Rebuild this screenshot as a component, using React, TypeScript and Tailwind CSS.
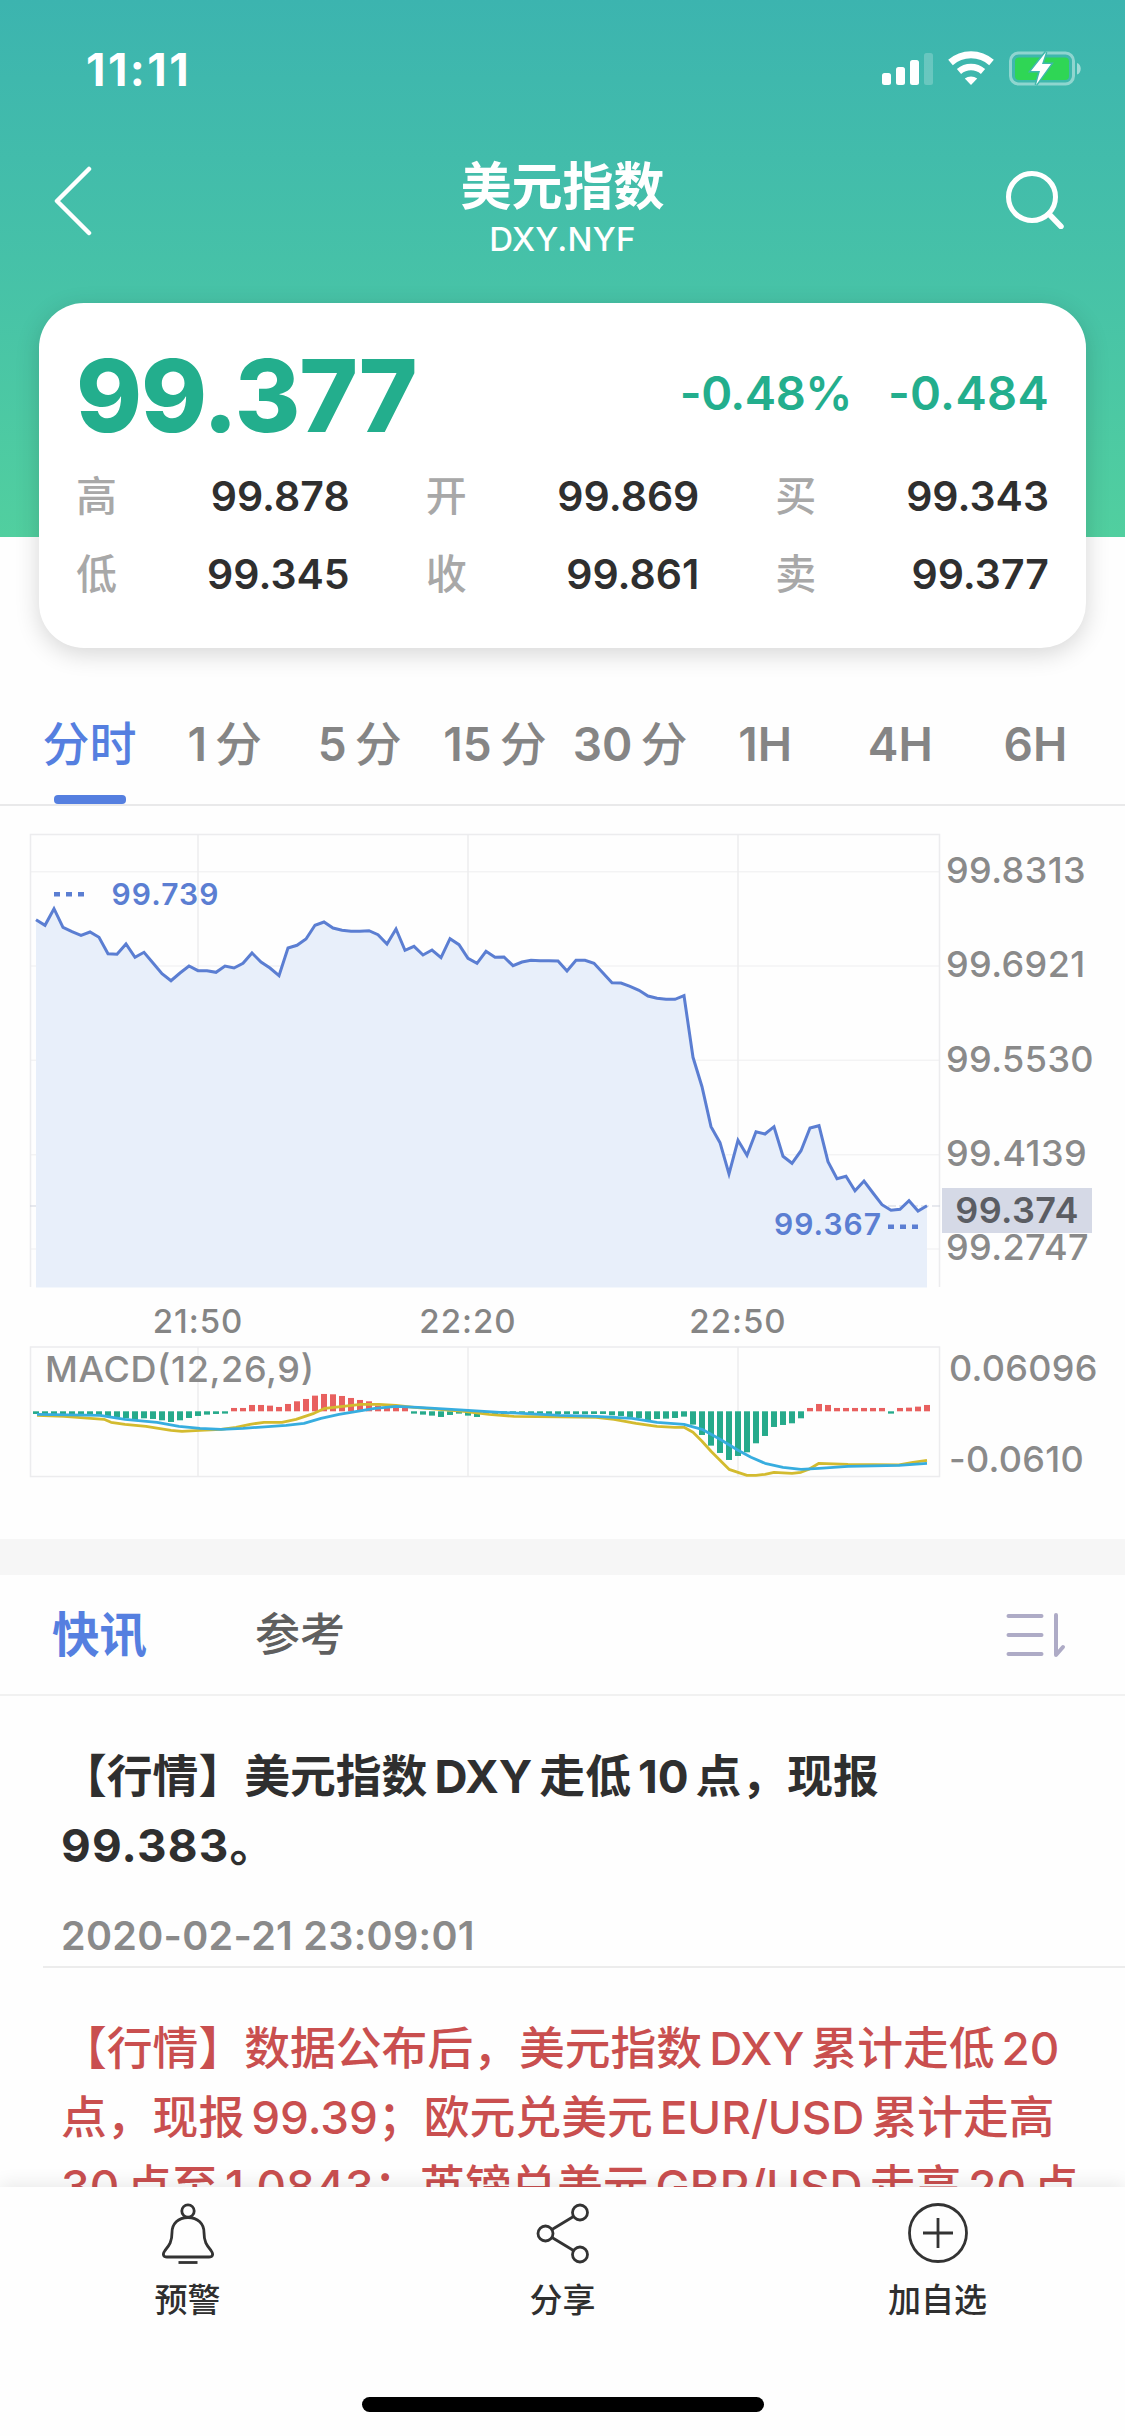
import type { ReactNode } from 'react'

const quotes = [
  { label: '高', value: '99.878' },
  { label: '开', value: '99.869' },
  { label: '买', value: '99.343' },
  { label: '低', value: '99.345' },
  { label: '收', value: '99.861' },
  { label: '卖', value: '99.377' },
]

const periods = [
  { num: '', unit: '分时' },
  { num: '1', unit: '分' },
  { num: '5', unit: '分' },
  { num: '15', unit: '分' },
  { num: '30', unit: '分' },
  { num: '1H', unit: '' },
  { num: '4H', unit: '' },
  { num: '6H', unit: '' },
]

const gridX = [198, 468, 738]
const times = ['21:50', '22:20', '22:50']
const priceTicks = ['99.8313', '99.6921', '99.5530', '99.4139', '99.2747']

// one sample per minute, distance below the chart area in thirds of a pixel
const prices = [
  299, 316, 266, 322, 335, 346, 336, 352, 401, 403, 372, 412, 397, 429, 461, 482, 459, 438, 452, 452,
  457, 438, 444, 430, 399, 426, 444, 467, 384, 376, 357, 316, 306, 324, 331, 334, 334, 332, 344, 372,
  327, 391, 379, 405, 390, 413, 356, 374, 415, 430, 394, 412, 411, 437, 426, 421, 422, 422, 423, 453,
  421, 421, 430, 459, 488, 489, 499, 511, 528, 535, 538, 538, 527, 712, 800, 920, 968, 1062, 961, 1006,
  935, 942, 920, 1009, 1030, 992, 924, 917, 1025, 1076, 1069, 1112, 1083, 1119, 1154, 1171, 1168, 1142, 1173, 1157,
]

// MACD histogram, same units, positive values go up
const histogram = [
  -8, -8, -8, -11, -11, -11, -11, -14, -15, -18, -21, -26, -21, -23, -27, -32, -27, -20, -14, -10,
  -8, -7, 10, 10, 19, 19, 17, 13, 22, 30, 37, 47, 52, 51, 46, 40, 34, 30, 17, 12,
  10, 10, -7, -10, -13, -17, -11, -7, -13, -17, -10, -8, -8, -8, -8, -8, -8, -8, -8, -8,
  -8, -9, -8, -8, -12, -14, -17, -20, -27, -23, -22, -20, -16, -40, -71, -103, -125, -146, -134, -123,
  -96, -74, -47, -41, -36, -21, 10, 22, 19, 10, 10, 10, 10, 10, 10, -7, 10, 11, 14, 19,
]

const dif =
  '37,79 64,80 104,83 111,86 125,88 146,90 171,94 182,95 200,94 221,93 236,91 250,88 264,86 282,86 296,83 314,77 325,72 343,70 361,68 379,68 396,69 414,71 464,75 489,78 514,80 560,80.5 596,81 614,83 636,87 657,90 675,91 684,91 693,96 702,105 711,115 720,124 729,133 738,136 747,139 756,139 765,138 774,136 792,137 801,136 809,133 819,127 848,128 899,128.5 913,126 927,124'
const dea =
  '37,78 100,79 125,83 157,86 179,90 200,92 221,93 243,92 286,89 304,87 321,82 339,78 357,75 375,72 396,70 418,71 468,74 500,76 560,79 596,80 632,82 657,86 684,88 702,93 720,103 738,114 751,121 765,127 783,131 801,133 819,132 848,130 899,129 927,127'

const minuteX = (i: number) => 36 + i * 9

function StatusIcons() {
  return (
    <svg className="overflow-visible" width="200" height="40" viewBox="0 0 200 40" fill="none">
      <g fill="#fff">
        <rect x="2" y="23" width="9" height="12" rx="2.5" />
        <rect x="16" y="17" width="9" height="18" rx="2.5" />
        <rect x="30" y="10" width="9" height="25" rx="2.5" />
        <rect x="44" y="3" width="9" height="32" rx="2.5" opacity=".22" />
      </g>
      <g>
        <path d="M70.500 12.500a31 31 0 0 1 41 0" stroke="#fff" strokeWidth="7" />
        <path d="M79 21.500a18.500 18.500 0 0 1 24 0" stroke="#fff" strokeWidth="6.500" />
        <path d="M84.800 28.600a10 10 0 0 1 12.400 0L91 35z" fill="#fff" />
      </g>
      <rect x="130.500" y="3" width="63" height="31" rx="8" stroke="#fff" strokeOpacity=".42" strokeWidth="3" />
      <path d="M197 13c5 1.500 5 10 0 11.500z" fill="#fff" opacity=".5" />
      <rect x="135" y="7.500" width="54" height="22.500" rx="4" fill="#2fd655" />
      <path d="M166 2 151 21h9l-4 14 15-21h-9z" fill="#fff" stroke="#3fb9ac" strokeWidth="3" paintOrder="stroke" />
    </svg>
  )
}

function PriceChart() {
  const line = prices.map((p, i) => `${minuteX(i)},${(p / 3).toFixed(1)}`).join(' ')

  return (
    <svg className="block" width="942" height="480" viewBox="0 0 942 480">
      <g stroke="#ececee" strokeWidth="1.5">
        {[51.7, 146, 240.3, 334.7, 429].map((y) => (
          <line key={y} x1="30" x2="939" y1={y} y2={y} stroke="#f3f3f4" />
        ))}
        {gridX.map((x) => (
          <line key={x} x1={x} x2={x} y1="14" y2="467" />
        ))}
        <path d="M30.500 467V14.500h909V467" fill="none" />
      </g>
      <line x1="30" x2="942" y1="386" y2="386" stroke="#cfd3de" strokeDasharray="8 3" />
      <polygon points={`36,467.500 ${line} 927,467.500`} fill="#e8effa" />
      <polyline points={line} fill="none" stroke="#5b7ed2" strokeWidth="3" />
      <g fill="#5b7ed2">
        {[54, 66, 78].map((x) => (
          <rect key={x} x={x} y="72" width="6" height="4.500" />
        ))}
        {[888, 900, 912].map((x) => (
          <rect key={x} x={x} y="404.500" width="6" height="4.500" />
        ))}
      </g>
      <g fill="#5b7ed2" fontSize="30" fontWeight="600">
        <text x="111.500" y="85" textLength="107">99.739</text>
        <text x="774" y="415" textLength="107">99.367</text>
      </g>
    </svg>
  )
}

function MacdChart() {
  return (
    <svg className="block" width="942" height="150" viewBox="0 0 942 150">
      <g stroke="#ececee" strokeWidth="1.5" fill="none">
        <rect x="30.500" y="7" width="909" height="129.500" />
        {gridX.map((x) => (
          <line key={x} x1={x} x2={x} y1="7" y2="136" />
        ))}
      </g>
      <text x="45" y="41.500" fontSize="36" fontWeight="550" fill="#8a8a8a" textLength="269">
        MACD(12,26,9)
      </text>
      {histogram.map((v, i) => (
        <rect
          key={i}
          x={minuteX(i) - 3}
          y={v > 0 ? 71.3 - v / 3 : 71.3}
          width="6"
          height={Math.abs(v) / 3}
          fill={v > 0 ? '#e8605f' : '#26aa8b'}
        />
      ))}
      <g fill="none" strokeWidth="2.800" strokeLinejoin="round" transform="translate(0 -3.700)">
        <polyline points={dif} stroke="#d3bb2f" />
        <polyline points={dea} stroke="#37addf" />
      </g>
    </svg>
  )
}

function Latin({ children }: { children: ReactNode }) {
  return <span className="mx-[7px]">{children}</span>
}

function BellIcon() {
  return (
    <svg width="60" height="64" viewBox="0 0 60 64" fill="none" stroke="#333" strokeWidth="2.800">
      <circle cx="30" cy="10" r="6.200" />
      <path d="M30 16.500c-10 0-16 6.500-16 15 0 9-2.500 12.500-7 18-3 4-1.500 6.500 2 6.500h42c3.500 0 5-2.500 2-6.500-4.500-5.500-7-9-7-18 0-8.500-6-15-16-15z" />
      <path d="M20.500 61.500h19" />
    </svg>
  )
}

function ShareIcon() {
  return (
    <svg width="60" height="64" viewBox="0 0 60 64" fill="none" stroke="#333" strokeWidth="2.800">
      <circle cx="47" cy="11.500" r="7.500" />
      <circle cx="12.500" cy="32.500" r="7.500" />
      <circle cx="47" cy="53.500" r="7.500" />
      <path d="m19 28.500 21.500-13M19 36.500l21.500 13" />
    </svg>
  )
}

function AddIcon() {
  return (
    <svg width="60" height="64" viewBox="0 0 60 64" fill="none" stroke="#333" strokeWidth="2.800">
      <circle cx="30" cy="32" r="28.500" />
      <path d="M30 17v30M15 32h30" />
    </svg>
  )
}

const actions = [
  { label: '预警', icon: BellIcon },
  { label: '分享', icon: ShareIcon },
  { label: '加自选', icon: AddIcon },
]

export default function App() {
  return (
    <div
      lang="zh-CN"
      className="flex h-[2436px] w-[1125px] flex-col overflow-hidden bg-[#fefefe] font-['Inter','Noto_Sans_CJK_SC',sans-serif] text-[#2f2f2f]"
    >
      {/* 顶部 */}
      <header className="h-[537px] shrink-0 bg-gradient-to-b from-[#3cb4af] to-[#51cf9f] text-white">
        <div className="flex h-[138px] items-end justify-between pr-[45px] pb-[48px] pl-[86px]">
          <span className="text-[45px] leading-[40px] font-bold tracking-[2.5px]">11:11</span>
          <StatusIcons />
        </div>
        <div className="flex h-[165px] items-start justify-between px-[52px] pt-5">
          <svg className="mt-[8px] mr-[24px]" width="44" height="70" viewBox="0 0 44 70" fill="none" stroke="#fff" strokeWidth="4.500">
            <path d="M37 3 5 35l32 32" strokeLinecap="round" strokeLinejoin="round" />
          </svg>
          <div className="flex flex-col items-center">
            <h1 className="text-[51px] leading-[58px] font-bold">美元指数</h1>
            <p className="mt-[3px] text-[33px] leading-[40px] font-medium tracking-[0.3px]">DXY.NYF</p>
          </div>
          <svg className="mt-[9px] mr-[8px]" width="60" height="62" viewBox="0 0 60 62" fill="none" stroke="#fff">
            <circle cx="27" cy="30" r="23.500" strokeWidth="5" />
            <path d="M44 47 56 59.500" strokeWidth="5.500" strokeLinecap="round" />
          </svg>
        </div>

        {/* 报价卡片 */}
        <section className="mx-[39px] h-[345px] rounded-[45px] bg-white px-[37px] pt-[41px] text-[#2f2f2f] shadow-[0_6px_24px_rgba(0,0,0,0.16)]">
          <div className="flex h-[104px] items-center justify-between text-[#23ae8d]">
            <span className="text-[100px] leading-none font-extrabold tracking-[-1.2px]">99.377</span>
            <div className="flex gap-[36px] pb-[7px] text-[47px] leading-none font-semibold">
              <span className="tracking-[-0.5px]">-0.48%</span>
              <span className="tracking-[0.3px]">-0.484</span>
            </div>
          </div>
          <div className="mt-[9px] grid grid-cols-3 gap-x-[76px]">
            {quotes.map((q) => (
              <div key={q.label} className="flex h-[78px] items-center justify-between text-[41px] leading-none">
                <span className="font-medium text-[#a8a8a8]">{q.label}</span>
                <span className="font-semibold">{q.value}</span>
              </div>
            ))}
          </div>
        </section>
      </header>

      {/* 周期 */}
      <nav className="mt-[111px] grid h-[158px] shrink-0 grid-cols-8 border-b-2 border-[#e9e9ea] px-[22px]">
        {periods.map((p, i) => (
          <div
            key={p.num + p.unit}
            className={`flex flex-col items-center justify-between pt-[66px] text-[47px] leading-[60px] font-medium whitespace-nowrap ${i === 0 ? 'text-[#557fe0]' : 'text-[#858585]'}`}
          >
            <span className="flex gap-[8px]">
              {p.num && <span className="text-[46px] font-semibold">{p.num}</span>}
              {p.unit && <span>{p.unit}</span>}
            </span>
            {i === 0 && <span className="h-[9px] w-[72px] rounded-[4px] bg-[#557fe0]" />}
          </div>
        ))}
      </nav>

      {/* 分时图 */}
      <section className="mt-[14px] flex h-[480px] shrink-0">
        <PriceChart />
        <div className="relative flex flex-col pt-[3px] pl-[4px] text-[36px] font-[550] tracking-[0.4px] text-[#8a8a8a]">
          {priceTicks.map((t) => (
            <span key={t} className="h-[94.3px] leading-[94.3px]">
              {t}
            </span>
          ))}
          <span className="absolute top-[368px] left-0 h-[45px] w-[150px] bg-[#d5d9e6] text-center leading-[45px] font-semibold text-[#5b5d63]">
            99.374
          </span>
        </div>
      </section>
      <div className="flex h-[40px] shrink-0 gap-[150px] pl-[138px] text-[33px] leading-[42px] font-[550] tracking-[1px] text-[#858585]">
        {times.map((t) => (
          <span key={t} className="w-[120px] text-center">
            {t}
          </span>
        ))}
      </div>
      <section className="flex h-[199px] shrink-0">
        <MacdChart />
        <div className="flex flex-col justify-between pt-[6px] pb-[57px] pl-[7px] text-[36px] leading-[45px] font-[550] tracking-[0.3px] text-[#8a8a8a]">
          <span>0.06096</span>
          <span>-0.0610</span>
        </div>
      </section>

      <div className="h-[36px] shrink-0 bg-[#f6f6f6]" />

      {/* 快讯 */}
      <nav className="flex h-[121px] shrink-0 items-center border-b-2 border-[#f1f1f1] pr-[56px] pl-[52px]">
        <span className="text-[47.500px] leading-none font-bold text-[#557fe0]">快讯</span>
        <span className="ml-[108px] text-[45px] leading-none font-medium text-[#5f5f5f]">参考</span>
        <svg className="ml-auto" width="64" height="50" viewBox="0 0 64 50" fill="none" stroke="#aeabc6" strokeWidth="4" strokeLinecap="round">
          <path d="M3.500 6h33M3.500 25h33M3.500 44h33" />
          <path d="M51 5v40l7-8" strokeLinejoin="round" />
        </svg>
      </nav>
      <main className="min-h-0 flex-1 overflow-hidden">
        <article className="ml-[43px] h-[272px] border-b-2 border-[#ececec] pt-[46px] pl-[18px]">
          <h2 className="text-[45.800px] leading-[69px] font-bold whitespace-nowrap">
            【行情】美元指数<Latin>DXY</Latin>走低<Latin>10</Latin>点，现报
            <br />
            <span className="tracking-[1.200px]">99.383</span>。
          </h2>
          <time className="mt-[36px] block text-[39.500px] leading-[40px] font-semibold tracking-[0.3px] text-[#8a8a8a]">
            2020-02-21 23:09:01
          </time>
        </article>
        <p className="pt-[46px] pl-[61px] text-[45.800px] leading-[69px] font-medium whitespace-nowrap text-[#c94f4f]">
          【行情】数据公布后，美元指数<Latin>DXY</Latin>累计走低<Latin>20</Latin>
          <br />
          点，现报<span className="ml-[7px]">99.39</span>；欧元兑美元<Latin>EUR/USD</Latin>累计走高
          <br />
          30<span className="ml-[7px]">点至</span>
          <span className="ml-[7px]">1.0843</span>；英镑兑美元<Latin>GBP/USD</Latin>走高<Latin>20</Latin>点
        </p>
      </main>

      {/* 底部操作栏 */}
      <footer className="z-10 flex h-[249px] shrink-0 flex-col items-center bg-[#fefefe] shadow-[0_-4px_16px_rgba(0,0,0,0.08)]">
        <div className="grid w-full grid-cols-3 pt-[14px]">
          {actions.map((a) => (
            <div key={a.label} className="flex flex-col items-center text-[33px] leading-[44px] font-medium">
              <a.icon />
              <span className="mt-[13px]">{a.label}</span>
            </div>
          ))}
        </div>
        <div className="mt-auto mb-[24px] h-[15px] w-[402px] rounded-full bg-black" />
      </footer>
    </div>
  )
}
